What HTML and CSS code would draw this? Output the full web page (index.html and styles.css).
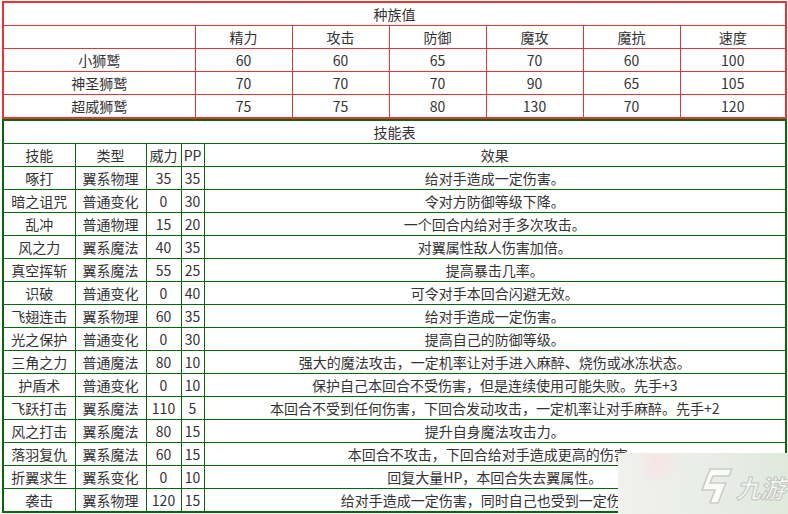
FILE: index.html
```html
<!DOCTYPE html>
<html lang="zh">
<head>
<meta charset="utf-8">
<title>小狮鹫</title>
<link rel="stylesheet" href="styles.css">
</head>
<body>
<div class="page">
  <table class="stats">
    <colgroup>
      <col class="c-name"><col class="c-stat"><col class="c-stat"><col class="c-stat"><col class="c-stat"><col class="c-stat"><col>
    </colgroup>
    <tr><td colspan="7">种族值</td></tr>
    <tr><td></td><td>精力</td><td>攻击</td><td>防御</td><td>魔攻</td><td>魔抗</td><td>速度</td></tr>
    <tr><td>小狮鹫</td><td>60</td><td>60</td><td>65</td><td>70</td><td>60</td><td>100</td></tr>
    <tr><td>神圣狮鹫</td><td>70</td><td>70</td><td>70</td><td>90</td><td>65</td><td>105</td></tr>
    <tr><td>超威狮鹫</td><td>75</td><td>75</td><td>80</td><td>130</td><td>70</td><td>120</td></tr>
  </table>
  <table class="skills">
    <colgroup>
      <col class="s-name"><col class="s-type"><col class="s-pow"><col class="s-pp"><col>
    </colgroup>
    <tr><td colspan="5">技能表</td></tr>
    <tr><td>技能</td><td>类型</td><td>威力</td><td>PP</td><td>效果</td></tr>
    <tr><td>啄打</td><td>翼系物理</td><td>35</td><td>35</td><td>给对手造成一定伤害。</td></tr>
    <tr><td>暗之诅咒</td><td>普通变化</td><td>0</td><td>30</td><td>令对方防御等级下降。</td></tr>
    <tr><td>乱冲</td><td>普通物理</td><td>15</td><td>20</td><td>一个回合内给对手多次攻击。</td></tr>
    <tr><td>风之力</td><td>翼系魔法</td><td>40</td><td>35</td><td>对翼属性敌人伤害加倍。</td></tr>
    <tr><td>真空挥斩</td><td>翼系魔法</td><td>55</td><td>25</td><td>提高暴击几率。</td></tr>
    <tr><td>识破</td><td>普通变化</td><td>0</td><td>40</td><td>可令对手本回合闪避无效。</td></tr>
    <tr><td>飞翅连击</td><td>翼系物理</td><td>60</td><td>35</td><td>给对手造成一定伤害。</td></tr>
    <tr><td>光之保护</td><td>普通变化</td><td>0</td><td>30</td><td>提高自己的防御等级。</td></tr>
    <tr><td>三角之力</td><td>普通魔法</td><td>80</td><td>10</td><td>强大的魔法攻击，一定机率让对手进入麻醉、烧伤或冰冻状态。</td></tr>
    <tr><td>护盾术</td><td>普通变化</td><td>0</td><td>10</td><td>保护自己本回合不受伤害，但是连续使用可能失败。先手+3</td></tr>
    <tr><td>飞跃打击</td><td>翼系魔法</td><td>110</td><td>5</td><td>本回合不受到任何伤害，下回合发动攻击，一定机率让对手麻醉。先手+2</td></tr>
    <tr><td>风之打击</td><td>翼系魔法</td><td>80</td><td>15</td><td>提升自身魔法攻击力。</td></tr>
    <tr><td>落羽复仇</td><td>翼系魔法</td><td>60</td><td>15</td><td>本回合不攻击，下回合给对手造成更高的伤害。</td></tr>
    <tr><td>折翼求生</td><td>翼系变化</td><td>0</td><td>10</td><td>回复大量HP，本回合失去翼属性。</td></tr>
    <tr><td>袭击</td><td>翼系物理</td><td>120</td><td>15</td><td>给对手造成一定伤害，同时自己也受到一定伤害。</td></tr>
  </table>
  <div class="watermark">
    <svg class="wm-logo" width="36" height="38" viewBox="0 0 36 38">
      <path d="M12 2 L34 2 L31 9 L15 9 L12 16 L28 16 L20 36 L12 36 L17 23 L4 23 Z" fill="#fbfbfa" stroke="#c9cbc8" stroke-width="1.6" stroke-linejoin="round"/>
    </svg>
    <span class="wm-text">九游</span>
  </div>
</div>
</body>
</html>
```
FILE: styles.css
```css
html, body {
  margin: 0;
  padding: 0;
  background: #ffffff;
}
body {
  font-family: "Noto Sans CJK SC", "Microsoft YaHei", sans-serif;
  font-size: 14px;
  color: #333333;
}
.page {
  position: relative;
  width: 788px;
  height: 514px;
  overflow: hidden;
  padding: 1px 0 0 2px;
  box-sizing: border-box;
}
table {
  border-collapse: collapse;
  table-layout: fixed;
  width: 785px;
}
td {
  padding: 0;
  height: 22px;
  line-height: 22px;
  text-align: center;
  white-space: nowrap;
  overflow: hidden;
}
.stats {
  border: 2px solid #e53535;
}
.stats td {
  border: 1px solid #e53535;
}
.c-name { width: 192px; }
.c-stat { width: 97px; }

.skills {
  border: 2px solid #0b650b;
}
.skills td {
  border: 1px solid #0b650b;
}
.s-name { width: 72px; }
.s-type { width: 71px; }
.s-pow { width: 35px; }
.s-pp { width: 23px; }

.watermark {
  position: absolute;
  left: 618px;
  top: 453px;
  width: 170px;
  height: 61px;
  background:
    radial-gradient(circle at 40px 10px, rgba(250, 225, 225, 0.9), rgba(250, 225, 225, 0) 22px),
    linear-gradient(to right, #f1f1ee, #e9ece6 60%, #dfe9dc);
  display: flex;
  align-items: center;
  gap: 2px;
  padding-left: 80px;
  box-sizing: border-box;
}
.wm-logo {
  flex: none;
  margin-top: 4px;
}
.wm-text {
  font-family: "Noto Sans CJK SC", sans-serif;
  font-size: 25px;
  font-weight: 700;
  font-style: italic;
  color: #f8f8f6;
  -webkit-text-stroke: 1px #c3c5c1;
  margin-top: 6px;
  letter-spacing: -1px;
}
```
